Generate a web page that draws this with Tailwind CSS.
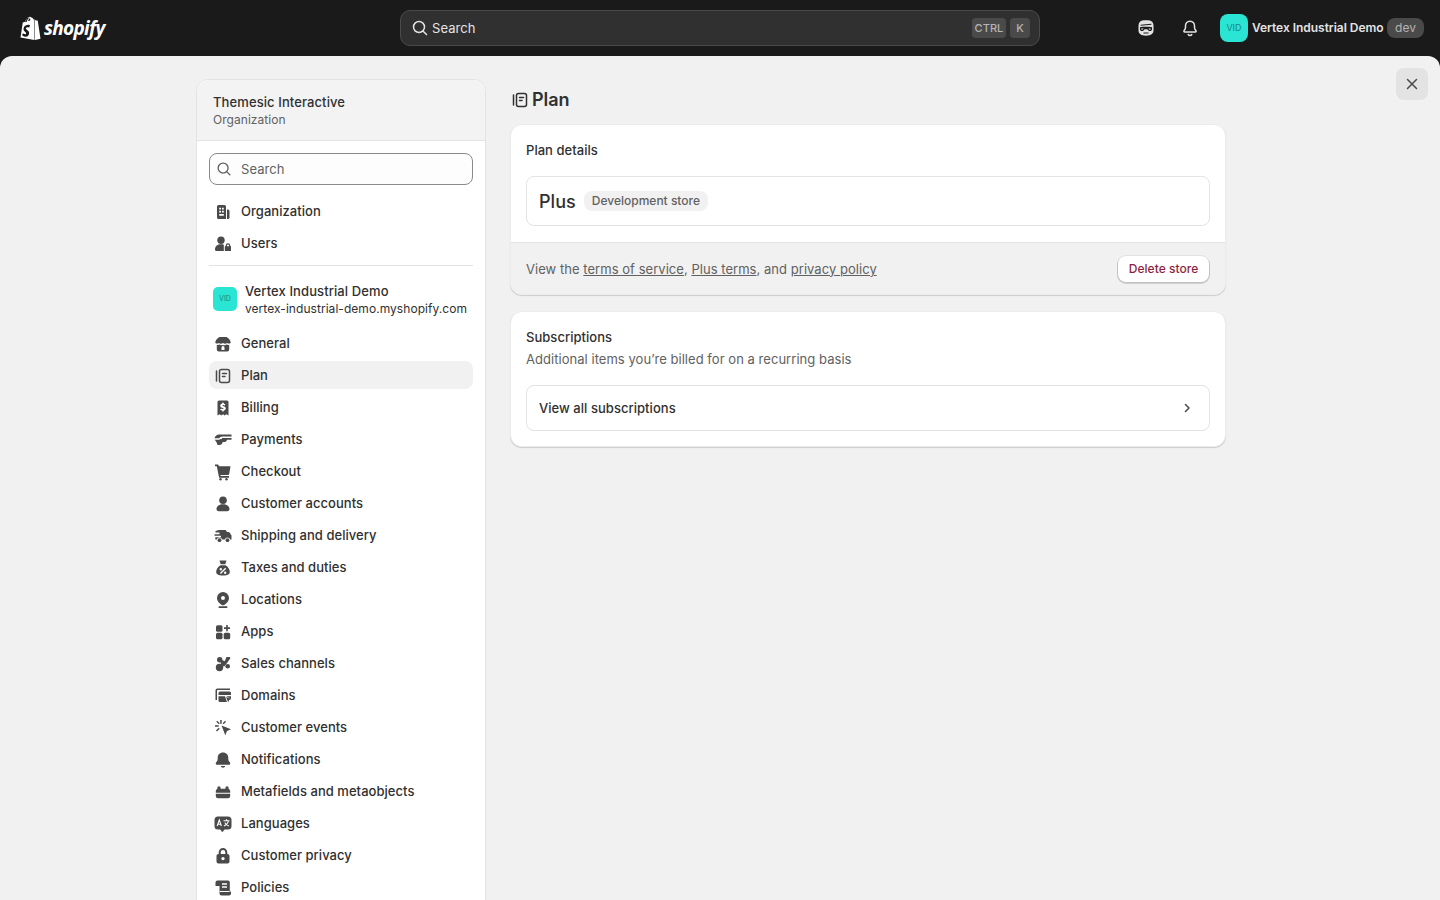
<!DOCTYPE html>
<html lang="en">
<head>
<meta charset="utf-8">
<title>Plan</title>
<script src="https://cdn.jsdelivr.net/npm/@tailwindcss/browser@4"></script>
</head>
<body class="h-[900px] w-[1440px] overflow-hidden bg-[#1a1a1a] font-['Inter',sans-serif] text-[13px] tracking-[0.04px] text-[#303030]">
  <!-- top bar -->
  <header class="flex h-14 items-center">
    <div class="flex w-[400px] items-center pl-[19px]">
      <svg class="h-[25px] w-[22px]" viewBox="0 0 21 25"><path fill="#fff" d="M14.600 3.300l-.7.2c-.4-1.200-1-2.100-2-2.100h-.2C11.300.9 10.900.7 10.500.7 7.900.7 6.700 3.900 6.300 5.500l-2.300.7c-.7.200-.7.200-.8.900L1 21.500l13.900 2.600V3.300h-.3zM10.800 4.400L8.500 5.100c.4-1.700 1.300-2.500 2-2.800.2.500.3 1.200.3 2.100zM9.500 1.600c.1 0 .3 0 .4.100-1 .5-2.100 1.700-2.500 4l-1.800.6C6.100 4.500 7.300 1.600 9.500 1.600zM15.400 24l5.600-1.300L18.300 4.900c0-.2-.2-.3-.3-.3l-1.700-.1-.9-.9V24z"/><path fill="#1a1a1a" d="M10.500 9.200l-.9 2.500s-.8-.4-1.700-.4c-1.400 0-1.500.9-1.500 1.100 0 1.200 3.200 1.700 3.200 4.600 0 2.300-1.400 3.700-3.400 3.700-2.300 0-3.500-1.400-3.500-1.400l.6-2s1.200 1 2.300 1c.7 0 1-.5 1-.9 0-1.600-2.600-1.700-2.600-4.300 0-2.200 1.600-4.400 4.800-4.400 1.300 0 1.600.5 1.600.5z"/></svg>
      <span class="ml-[3px] font-['Open_Sans',sans-serif] text-[19px] leading-none font-bold tracking-[-0.7px] text-white italic">shopify</span>
    </div>
    <div class="flex h-9 w-[640px] items-center rounded-[10px] border border-[#4a4a4a] bg-[#303030] pr-[9px] pl-[9px]">
      <svg class="h-5 w-5" viewBox="0 0 20 20" fill="none" stroke="#e3e3e3" stroke-width="1.500" stroke-linecap="round"><circle cx="9" cy="9" r="5.500"/><path d="M13.200 13.200l3.300 3.300"/></svg>
      <span class="ml-[2px] pt-[2px] text-[#e3e3e3]">Search</span>
      <span class="ml-auto flex h-5 w-[34px] items-center justify-center rounded bg-[#4a4a4a] text-[11px] font-medium text-[#b5b5b5]">CTRL</span>
      <span class="ml-1 flex h-5 w-5 items-center justify-center rounded bg-[#4a4a4a] text-[11px] font-medium text-[#b5b5b5]">K</span>
    </div>
    <div class="ml-[96px] flex items-center">
      <svg class="h-5 w-5" viewBox="0 0 20 20"><path fill="#e3e3e3" fill-rule="evenodd" d="M10 2.300c3 0 5 .4 6 1.400 1 1 1.500 2.400 1.500 4.300v4.500c0 3.200-2.800 5.200-7.500 5.200s-7.500-2-7.500-5.200V8c0-1.900.5-3.300 1.500-4.300 1-1 3-1.400 6-1.400zM4.600 6.700l10.800-.9v1l-10.800.9zM4 9.300v2.300c0 .9.800 1.500 1.900 1.500 1.400 0 2.100-.8 2.600-1.800h3c.5 1 1.200 1.800 2.600 1.800 1.100 0 1.900-.6 1.900-1.500V9.300c-3-.6-9-.6-12 0zM5.300 10.400h2.300l-.5.900c-.3.400-.8.500-1.300.4l-.5-.3zM14.700 10.400h-2.300l.5.900c.3.400.8.500 1.300.4l.5-.3zM7.500 14.600h5v1h-5z"/></svg>
      <svg class="ml-6 h-5 w-5" viewBox="0 0 20 20" fill="none" stroke="#e3e3e3" stroke-width="1.500" stroke-linejoin="round" stroke-linecap="round"><path d="M10 3.200c-2.700 0-4.500 2-4.500 4.600v1.700c0 1.100-.5 2-1.300 3-.6.800-.4 1.500.6 1.500h10.400c1 0 1.200-.7.600-1.500-.8-1-1.300-1.900-1.300-3V7.800c0-2.600-1.800-4.600-4.500-4.600z"/><path d="M8.200 16.500c.4.600 1 .9 1.800.9s1.400-.3 1.800-.9"/></svg>
      <span class="ml-5 flex h-7 w-7 items-center justify-center rounded-lg bg-[#2ae4d4] text-[9px] text-[#188a80]">VID</span>
      <span class="ml-1 w-[132px] text-xs font-semibold tracking-[-0.03px] whitespace-nowrap text-[#e3e3e3]">Vertex Industrial Demo</span>
      <span class="ml-[3px] flex h-5 w-[37px] items-center justify-center rounded-lg bg-[#4a4a4a] text-xs text-[#b5b5b5]">dev</span>
    </div>
  </header>

  <main class="relative flex h-[844px] items-start gap-6 overflow-hidden rounded-t-xl bg-[#f1f1f1] pt-[23px] pl-[196px]">
    <button class="absolute top-3 left-[1396px] flex h-8 w-8 items-center justify-center rounded-lg bg-[#e3e3e3]">
      <svg class="h-5 w-5" viewBox="0 0 20 20" fill="none" stroke="#4a4a4a" stroke-width="1.500" stroke-linecap="round"><path d="M5.500 5.500l9 9M14.500 5.500l-9 9"/></svg>
    </button>

    <!-- settings nav -->
    <aside class="w-[290px] shrink-0 rounded-t-xl border border-[#e3e3e3] bg-white">
      <div class="flex h-[61px] flex-col justify-center rounded-t-xl border-b border-[#e3e3e3] bg-[#f3f3f3] px-4 pt-[1px]">
        <p class="leading-[18px] font-medium tracking-[0.1px]">Themesic Interactive</p>
        <p class="text-xs leading-[17px] text-[#616161]">Organization</p>
      </div>
      <div class="px-3 pt-3">
        <div class="flex h-8 items-center rounded-lg border border-[#8a8a8a] bg-[#fdfdfd] pl-[5px]">
          <svg class="h-[18px] w-[18px]" viewBox="0 0 20 20" fill="none" stroke="#616161" stroke-width="1.500" stroke-linecap="round"><circle cx="9" cy="9" r="5.500"/><path d="M13.200 13.200l3.300 3.300"/></svg>
          <span class="ml-2 pt-[2px] text-[#616161]">Search</span>
        </div>
        <nav class="mt-3 flex flex-col gap-1">
          <a class="flex h-7 items-center gap-2 px-1 pt-[2px] font-[450]"><svg class="h-5 w-5" viewBox="0 0 20 20" fill="#4a4a4a"><path fill-rule="evenodd" d="M4 4.500A1.500 1.500 0 015.500 3h6A1.500 1.500 0 0113 4.500V17H5.500A1.500 1.500 0 014 15.500zM6.200 5.700h1.800v1.800H6.200zM9 5.700h1.800v1.800H9zM6.200 8.700h1.800v1.800H6.200zM9 8.700h1.800v1.800H9zM6.200 12h4.600v1.800H6.200z"/><path d="M14 7.500h1A1.500 1.500 0 0116.500 9v6.500A1.500 1.500 0 0115 17h-1z"/></svg>Organization</a>
          <a class="flex h-7 items-center gap-2 px-1 pt-[2px] font-[450]"><svg class="h-5 w-5" viewBox="0 0 20 20" fill="#4a4a4a"><circle cx="8" cy="6.200" r="3.700"/><path d="M2 15.500c0-3.500 2.600-5.200 6-5.200 1 0 1.900.1 2.800.5V17H3.500A1.500 1.500 0 012 15.500z"/><path fill-rule="evenodd" d="M15 9.200a2.300 2.300 0 012.300 2.300v.8h.7V17h-6.200v-4.700h.9v-.8A2.300 2.300 0 0115 9.200zm-1 3.100h2v-.8a1 1 0 00-2 0z"/></svg>Users</a>
        </nav>
        <div class="mt-2 h-px bg-[#e3e3e3]"></div>
        <div class="flex h-[63px] items-center gap-2 pl-1">
          <span class="mt-[3px] flex h-6 w-6 shrink-0 items-center justify-center rounded-[5px] bg-[#2ae4d4] text-[7px] text-[#188a80]">VID</span>
          <div class="mt-[5px]">
            <p class="leading-[17px] font-[450] tracking-[0.1px] whitespace-nowrap">Vertex Industrial Demo</p>
            <p class="text-xs leading-[17px] tracking-[0.05px] whitespace-nowrap">vertex-industrial-demo.myshopify.com</p>
          </div>
        </div>
        <nav class="flex flex-col gap-1">
          <a class="flex h-7 items-center gap-2 rounded-lg px-1 pt-[2px] font-[450]"><svg class="h-5 w-5" viewBox="0 0 20 20" fill="#4a4a4a"><path d="M6.500 3h7c2.200.9 3.800 3 4.300 5.700-1 1-2.600 1.200-3.600.3-1.200 1-3 1-4.200 0-1.200 1-3 1-4.200 0-1 .9-2.600.7-3.600-.3C2.700 6 4.300 3.900 6.500 3z"/><path fill-rule="evenodd" d="M3.800 10.800c1 .3 1.900.2 2.700-.2 1 .6 2.300.8 3.500.4 1.200.4 2.500.2 3.500-.4.800.4 1.700.5 2.700.2v4.700a2 2 0 01-2 2H5.800a2 2 0 01-2-2zm4.700 2.700V16h3v-2.500a1.500 1.500 0 00-3 0z"/></svg>General</a>
          <a class="flex h-7 items-center gap-2 rounded-lg bg-[#f1f1f1] px-1 pt-[2px] font-[450]"><svg class="h-5 w-5" viewBox="0 0 20 20" fill="none" stroke="#4a4a4a" stroke-width="1.500" stroke-linecap="round"><path d="M3.500 5v10"/><rect x="6.500" y="3.500" width="10" height="13" rx="2"/><path d="M9.500 7.500h4M9.500 10.500h2.500"/></svg>Plan</a>
          <a class="flex h-7 items-center gap-2 rounded-lg px-1 pt-[2px] font-[450]"><svg class="h-5 w-5" viewBox="0 0 20 20" fill="#4a4a4a"><path fill-rule="evenodd" d="M6 2.500h8A1.500 1.500 0 0115.500 4v13.500l-2.200-1.200-1.600 1.200-1.700-1.200-1.700 1.200-1.600-1.200-2.200 1.200V4A1.500 1.500 0 016 2.500zm3.300 2v1c-1.300.3-2.100 1.100-2.100 2.300 0 1.300 1 1.800 2.200 2.100.9.200 1.300.4 1.300.7s-.4.500-1 .5c-.6 0-1.200-.2-1.600-.6l-1 1.100c.5.500 1.200.9 2.200 1v1h1.400v-1c1.300-.3 2.100-1.100 2.100-2.300 0-1.300-1-1.800-2.200-2.100-.9-.2-1.300-.4-1.300-.6s.3-.5.900-.5c.5 0 1 .2 1.400.5l.9-1.100c-.5-.4-1.100-.7-1.700-.8v-1z"/></svg>Billing</a>
          <a class="flex h-7 items-center gap-2 rounded-lg px-1 pt-[2px] font-[450]"><svg class="h-5 w-5" viewBox="0 0 20 20" fill="#4a4a4a"><path d="M5.500 4.500h13v2H9.500c-.9 0-1.400.2-2 .6L6 8.200H1.500c.7-2 2-3.300 4-3.700zM9 8h9.500v1.800H9zM1.500 9.800H6l2.200-1.100c1.100 1 3 1.300 5.800 1-.3 1.500-1.300 2.300-3 2.300H9.700c-.3 1.800-1.500 3-3.500 3H4.500c-.5-2.200-1.500-4-3-5.200z"/></svg>Payments</a>
          <a class="flex h-7 items-center gap-2 rounded-lg px-1 pt-[2px] font-[450]"><svg class="h-5 w-5" viewBox="0 0 20 20" fill="#4a4a4a"><path d="M2 2.500h2.200c.8 0 1.400.4 1.600 1.100l.2.700H17.500l-1.200 7.200c-.2 1-.9 1.500-1.800 1.500H7.400l.2 1H16v1.700H6.100L3.800 4.200H2z"/><circle cx="7.500" cy="17.200" r="1.200"/><circle cx="13.500" cy="17.200" r="1.200"/></svg>Checkout</a>
          <a class="flex h-7 items-center gap-2 rounded-lg px-1 pt-[2px] font-[450]"><svg class="h-5 w-5" viewBox="0 0 20 20" fill="#4a4a4a"><circle cx="10" cy="6.200" r="3.800"/><path d="M3.500 15c0-3 3-4.700 6.500-4.700s6.500 1.700 6.500 4.700c0 1.300-.9 2.200-2.200 2.200H5.700c-1.300 0-2.200-.9-2.200-2.200z"/></svg>Customer accounts</a>
          <a class="flex h-7 items-center gap-2 rounded-lg px-1 pt-[2px] font-[450]"><svg class="h-5 w-5" viewBox="0 0 20 20" fill="#4a4a4a"><path d="M6 4h6c.9 0 1.500.6 1.600 1.400l.1.600h1.600c.7 0 1.200.3 1.500.8L18.500 9.600V13.500h-1.300a2.800 2.800 0 00-5.400 0H9.200a2.800 2.800 0 00-5.400 0H2.300v-2.300H8V9.700H1.500V8.200h5V6.500h-4V5z"/><circle cx="6.500" cy="14.200" r="1.900"/><circle cx="14.500" cy="14.200" r="1.900"/></svg>Shipping and delivery</a>
          <a class="flex h-7 items-center gap-2 rounded-lg px-1 pt-[2px] font-[450]"><svg class="h-5 w-5" viewBox="0 0 20 20" fill="#4a4a4a"><path fill-rule="evenodd" d="M6.500 2.500h7l-1.200 3.800H7.700zM7.500 7.200h5c2.600 1.600 4.300 4 4.300 6.600 0 2.500-2 3.700-6.800 3.700s-6.800-1.200-6.800-3.700c0-2.600 1.700-5 4.300-6.600zM12.200 9.800l-5.300 5.300 1 1 5.300-5.300zM7.800 10a1.200 1.200 0 100 2.400 1.200 1.200 0 000-2.400zm4.400 3.500a1.200 1.200 0 100 2.400 1.200 1.200 0 000-2.400z"/></svg>Taxes and duties</a>
          <a class="flex h-7 items-center gap-2 rounded-lg px-1 pt-[2px] font-[450]"><svg class="h-5 w-5" viewBox="0 0 20 20" fill="#4a4a4a"><path fill-rule="evenodd" d="M10 2a6 6 0 016 6c0 3.200-2.700 5.600-4.900 7a2 2 0 01-2.200 0C6.700 13.600 4 11.200 4 8a6 6 0 016-6zm0 4a2 2 0 100 4 2 2 0 000-4z"/><rect x="5.500" y="16.300" width="9" height="1.700" rx=".8"/></svg>Locations</a>
          <a class="flex h-7 items-center gap-2 rounded-lg px-1 pt-[2px] font-[450]"><svg class="h-5 w-5" viewBox="0 0 20 20" fill="#4a4a4a"><rect x="3" y="3.200" width="6.500" height="6.500" rx="1.500"/><rect x="3" y="10.800" width="6.500" height="6.500" rx="1.500"/><rect x="10.700" y="10.800" width="6.500" height="6.500" rx="1.500"/><path d="M13.200 3h1.600v2.300H17v1.600h-2.200v2.300h-1.600V6.900H11V5.300h2.200z"/></svg>Apps</a>
          <a class="flex h-7 items-center gap-2 rounded-lg px-1 pt-[2px] font-[450]"><svg class="h-5 w-5" viewBox="0 0 20 20" fill="#4a4a4a"><circle cx="6.700" cy="5.700" r="2.700"/><circle cx="6.500" cy="13.500" r="3.700"/><circle cx="14.700" cy="12.200" r="2.300"/><path d="M13.500 3h2.700a1 1 0 011 1.500l-3.500 5-2.500 3-3-1-1-6 2 .5 2.500 1.200z"/></svg>Sales channels</a>
          <a class="flex h-7 items-center gap-2 rounded-lg px-1 pt-[2px] font-[450]"><svg class="h-5 w-5" viewBox="0 0 20 20" fill="#4a4a4a"><path d="M4.500 2.500H17V4H4.500c-.3 0-.5.200-.5.500V14H2.500V4.500c0-1.100.9-2 2-2z"/><path d="M7 5.500h9.500A1.500 1.500 0 0118 7v2H5.500V7A1.500 1.500 0 017 5.500zM5.500 10.200H12l2 5.800H7A1.500 1.500 0 015.500 14.500zM13.200 10.200H18v2.800z"/><path d="M13 11l5.500 2-2.300 1-1 2.300z"/></svg>Domains</a>
          <a class="flex h-7 items-center gap-2 rounded-lg px-1 pt-[2px] font-[450]"><svg class="h-5 w-5" viewBox="0 0 20 20" fill="#4a4a4a"><path d="M8.500 7.500l9.500 3.700-4 1.700-1.700 4.300z"/><path d="M7.200 2h1.500v3.700H7.200zM2 7.200h3.700v1.500H2zM3.300 3.700l1-1 2.500 2.500-1 1zM12 2.700l1 1-2.300 2.500-1-1zM5.700 9.700l1 1-2.700 2.700-1-1z"/></svg>Customer events</a>
          <a class="flex h-7 items-center gap-2 rounded-lg px-1 pt-[2px] font-[450]"><svg class="h-5 w-5" viewBox="0 0 20 20" fill="#4a4a4a"><path d="M10 2.500c-3.200 0-5.300 2.400-5.300 5.300v1.500c0 1-.6 1.900-1.500 2.900-.9 1.100-.4 2.600 1.100 2.600h11.400c1.500 0 2-1.500 1.100-2.600-.9-1-1.500-1.900-1.500-2.900V7.800c0-2.900-2.100-5.300-5.300-5.300zM7.800 16h4.400c-.3 1-1.100 1.700-2.200 1.700S8.100 17 7.800 16z"/></svg>Notifications</a>
          <a class="flex h-7 items-center gap-2 rounded-lg px-1 pt-[2px] font-[450]"><svg class="mx-px h-[18px] w-[18px]" viewBox="0 0 20 20" fill="#4a4a4a"><path fill-rule="evenodd" d="M5.500 3.500a1.800 1.800 0 011.800 1.800V6.500h5.400V5.300a1.800 1.800 0 013.600 0v1.400A2.500 2.500 0 0118 9v5.500a2.500 2.500 0 01-2.500 2.500h-11A2.500 2.500 0 012 14.500V9a2.500 2.500 0 011.700-2.300V5.300a1.800 1.800 0 011.800-1.800zM2 10.700h16v1.300H2z"/></svg>Metafields and metaobjects</a>
          <a class="flex h-7 items-center gap-2 rounded-lg px-1 pt-[2px] font-[450]"><svg class="h-5 w-5" viewBox="0 0 20 20"><path fill="#4a4a4a" d="M5 2.500h10A3.500 3.500 0 0118.500 6v6a3.500 3.500 0 01-3.500 3.500h-3.500l-1.500 2c-.4.500-.9.500-1.300 0l-1.500-2H5A3.500 3.500 0 011.500 12V6A3.500 3.500 0 015 2.500z"/><path fill="none" stroke="#fff" stroke-width="1.100" d="M4.200 12l2.100-6 2.100 6M4.900 10.200h2.800M10.500 6.800h6M13.500 5.300v1.500M15.400 6.800c-.3 2.200-1.800 4-4.400 5.200M11.800 8.600c.6 1.500 2 2.800 4.200 3.400"/></svg>Languages</a>
          <a class="flex h-7 items-center gap-2 rounded-lg px-1 pt-[2px] font-[450]"><svg class="h-5 w-5" viewBox="0 0 20 20" fill="#4a4a4a"><path fill-rule="evenodd" d="M10 2a4.300 4.300 0 014.300 4.300V8h.2c1.100 0 2 .9 2 2v5.500c0 1.100-.9 2-2 2h-9c-1.100 0-2-.9-2-2V10c0-1.100.9-2 2-2h.2V6.300A4.300 4.300 0 0110 2zM7.700 8h4.600V6.300a2.300 2.300 0 00-4.600 0zM10 10.900a1.700 1.700 0 100 3.400 1.700 1.700 0 000-3.400z"/></svg>Customer privacy</a>
          <a class="flex h-7 items-center gap-2 rounded-lg px-1 pt-[2px] font-[450]"><svg class="h-5 w-5" viewBox="0 0 20 20"><path fill="#4a4a4a" d="M4.500 2.500h10.500a1.800 1.800 0 011.800 1.800V13.500h1.200v2A2 2 0 0116 17.500H8.500a2 2 0 01-2-2V8H2.500V4.500a2 2 0 012-2z"/><path stroke="#fff" stroke-width="1.300" d="M9 6h5M9 9h5"/><path stroke="#fff" d="M6.500 13.500h10"/></svg>Policies</a>
        </nav>
      </div>
    </aside>

    <!-- page -->
    <section class="w-[716px] shrink-0">
      <h1 class="flex h-[45px] items-start gap-[2px] pt-[9px] text-lg leading-[24px] font-semibold tracking-[-0.05px]">
        <svg class="mt-[2px] h-5 w-5" viewBox="0 0 20 20" fill="none" stroke="#303030" stroke-width="1.500" stroke-linecap="round"><path d="M3.500 5v10"/><rect x="6.500" y="3.500" width="10" height="13" rx="2"/><path d="M9.500 7.500h4M9.500 10.500h2.500"/></svg>
        Plan
      </h1>
      <div class="overflow-hidden rounded-xl border border-[#ececec] bg-white shadow-[0_1px_1px_rgba(0,0,0,0.15)]">
        <div class="px-[15px] pt-4 pb-4">
          <h2 class="leading-[18px] font-[550]">Plan details</h2>
          <div class="mt-[17px] flex h-[50px] items-center gap-2 rounded-lg border border-[#e3e3e3] px-3">
            <span class="pt-[1px] text-lg font-[550]">Plus</span>
            <span class="flex h-5 items-center rounded-lg bg-[#f1f1f1] px-2 text-xs font-[450] tracking-normal text-[#616161]">Development store</span>
          </div>
        </div>
        <div class="flex h-[52px] items-center justify-between border-t border-[#e3e3e3] bg-[#f1f1f1] pr-[16px] pl-[15px] text-[#616161]">
          <p class="pt-[2px]">View the <a class="underline">terms of service</a>, <a class="underline">Plus terms</a>, and <a class="underline">privacy policy</a></p>
          <button class="flex h-[26px] w-[91px] items-center justify-center rounded-lg bg-white text-xs font-medium text-[#8e1f3f] shadow-[0_0_0_1px_rgba(0,0,0,0.06),0_1px_0_1px_rgba(0,0,0,0.14)]">Delete store</button>
        </div>
      </div>
      <div class="mt-4 rounded-xl border border-[#ececec] bg-white px-[15px] pt-4 pb-[15px] shadow-[0_1px_1px_rgba(0,0,0,0.15)]">
        <h2 class="leading-[18px] font-[550]">Subscriptions</h2>
        <p class="mt-1 leading-[18px] text-[#616161]">Additional items you’re billed for on a recurring basis</p>
        <div class="mt-[17px] flex h-[46px] items-center justify-between rounded-lg border border-[#e3e3e3] px-3 font-[550]">
          <span class="pt-[2px]">View all subscriptions</span>
          <svg class="h-5 w-5" viewBox="0 0 20 20" fill="none" stroke="#4a4a4a" stroke-width="1.500" stroke-linecap="round" stroke-linejoin="round"><path d="M8.500 6.500l3.500 3.500-3.500 3.500"/></svg>
        </div>
      </div>
    </section>
  </main>
</body>
</html>
